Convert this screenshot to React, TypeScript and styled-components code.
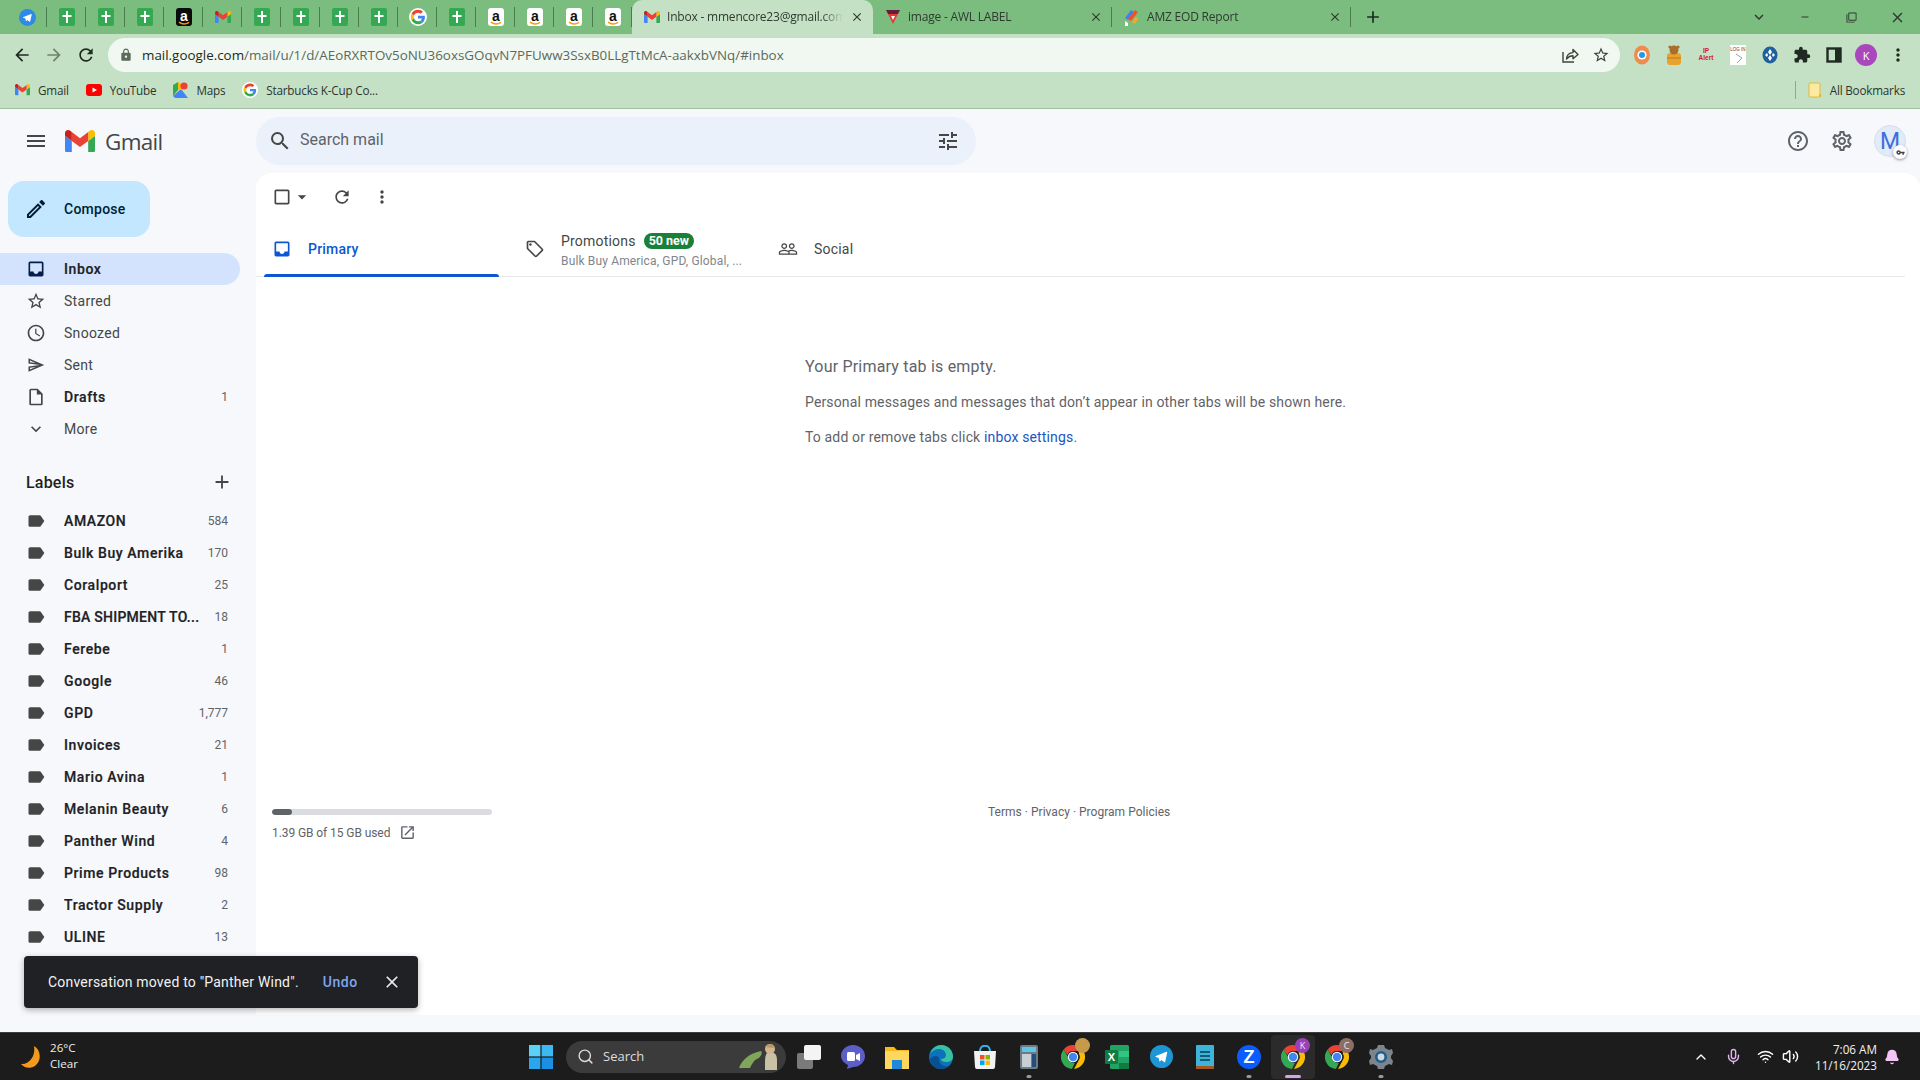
import React from 'react';
import styled, { createGlobalStyle } from 'styled-components';
import {
  MdAdd, MdArrowBack, MdArrowDropDown, MdArrowForward, MdCheckBoxOutlineBlank, MdClose, MdExpandMore, MdExtension,
  MdHelpOutline, MdInbox, MdLabel, MdLock, MdMenu, MdMoreVert, MdOpenInNew, MdOutlineEdit, MdOutlineInsertDriveFile,
  MdOutlineLocalOffer, MdOutlineSettings, MdPeopleOutline, MdRefresh, MdSearch, MdStarBorder, MdTune,
  MdAccessTime, MdOutlineSend, MdRemove, MdFilterNone, MdKeyboardArrowDown, MdVpnKey,
} from 'react-icons/md';
import { Bell, ChevronUp, Mic, Search, Volume2, Wifi } from 'lucide-react';

const GlobalStyle = createGlobalStyle`
  html, body { margin: 0; padding: 0; height: 1080px; overflow: hidden; background: #F6F8FC; }
  * { box-sizing: border-box; }
  body { font-family: Roboto, "Open Sans", Arial, sans-serif; }
`;

const Page = styled.div`
  width: 1920px;
  height: 1080px;
  display: flex;
  flex-direction: column;
  overflow: hidden;
  position: relative;
`;

/* browser chrome */
const TabStrip = styled.div`
  height: 34px;
  background: #7ABD7E;
  display: flex;
  align-items: stretch;
  padding-left: 8px;
  font-family: "Open Sans", sans-serif;
  font-size: 12px;
  color: #2f3a30;
  flex: none;
`;

const PinnedTab = styled.div`
  width: 39px;
  display: flex;
  align-items: center;
  justify-content: center;
  position: relative;
  &:not(:last-child)::after {
    content: '';
    position: absolute;
    right: 0;
    top: 7px;
    height: 20px;
    width: 1px;
    background: #4a7d4e;
  }
`;

const PageTab = styled.div<{ $active?: boolean }>`
  width: ${p => (p.$active ? '241px' : '239px')};
  background: ${p => (p.$active ? '#C5E1C5' : 'transparent')};
  border-radius: ${p => (p.$active ? '10px 10px 0 0' : '0')};
  display: flex;
  align-items: center;
  gap: 7px;
  padding: 0 9px 0 12px;
  position: relative;
  ${p => !p.$active && `
    &::after {
      content: '';
      position: absolute;
      right: 0;
      top: 7px;
      height: 20px;
      width: 1px;
      background: #4a7d4e;
    }
  `}
`;

const TabTitle = styled.span`
  flex: 1;
  min-width: 0;
  white-space: nowrap;
  overflow: hidden;
  letter-spacing: -0.2px;
  position: relative;
  top: -1px;
  mask-image: linear-gradient(to right, #000 88%, transparent 100%);
`;

const NewTab = styled.div`
  width: 44px;
  display: flex;
  align-items: center;
  justify-content: center;
  color: #1c2a1d;
`;

const WindowControls = styled.div`
  margin-left: auto;
  display: flex;
  align-items: center;
  color: #2f3a30;
`;

const WindowButton = styled.div`
  width: 46px;
  height: 34px;
  display: flex;
  align-items: center;
  justify-content: center;
`;

const Toolbar = styled.div`
  height: 42px;
  background: #C5E1C5;
  display: flex;
  align-items: center;
  padding: 0 6px 0 6px;
  flex: none;
`;

const NavButton = styled.div<{ $dim?: boolean }>`
  width: 32px;
  height: 32px;
  display: flex;
  align-items: center;
  justify-content: center;
  color: ${p => (p.$dim ? '#6f8370' : '#1f2a20')};
`;

const Omnibox = styled.div`
  width: 1512px;
  height: 34px;
  margin-left: 6px;
  background: #F1F8F1;
  border-radius: 17px;
  display: flex;
  align-items: center;
  padding: 0 4px 0 11px;
  font-family: "Open Sans", sans-serif;
  font-size: 13.4px;
  color: #5a6a5c;
`;

const UrlHost = styled.span`
  color: #1f2a20;
`;

const UrlText = styled.span`
  margin-left: 9px;
  white-space: nowrap;
  flex: 1;
`;

const OmniIcon = styled.div`
  width: 31px;
  display: flex;
  justify-content: center;
  color: #3a453b;
`;

const ExtRow = styled.div`
  display: flex;
  align-items: center;
  margin-left: 6px;
`;

const ExtSlot = styled.div`
  width: 32px;
  display: flex;
  justify-content: center;
  align-items: center;
  color: #1f2a20;
`;

const ProfileBadge = styled.div<{ $size: number; $bg: string }>`
  width: ${p => p.$size}px;
  height: ${p => p.$size}px;
  border-radius: 50%;
  background: ${p => p.$bg};
  color: #fff;
  display: flex;
  align-items: center;
  justify-content: center;
  font-size: ${p => Math.round(p.$size * 0.52)}px;
  font-family: "Open Sans", sans-serif;
`;

const BookmarkBar = styled.div`
  height: 33px;
  background: #C5E1C5;
  border-bottom: 1px solid #a4bea5;
  display: flex;
  align-items: center;
  padding: 0 15px 4px 15px;
  font-family: "Open Sans", sans-serif;
  font-size: 11.7px;
  color: #2c352d;
  letter-spacing: -0.2px;
  flex: none;
`;

const Bookmark = styled.div`
  display: flex;
  align-items: center;
  gap: 8px;
  margin-right: 17px;
  white-space: nowrap;
`;

const AllBookmarks = styled.div`
  margin-left: auto;
  display: flex;
  align-items: center;
  gap: 8px;
  height: 18px;
  padding-left: 12px;
  border-left: 1px solid #8fa890;
`;

/* gmail */
const Shell = styled.div`
  flex: 1;
  min-height: 0;
  background: #F6F8FC;
  display: flex;
  flex-direction: column;
`;

const Header = styled.div`
  height: 64px;
  display: flex;
  align-items: center;
  flex: none;
`;

const Brand = styled.div`
  width: 256px;
  display: flex;
  align-items: center;
  padding-left: 24px;
  color: #444746;
`;

const MenuGap = styled.span`
  width: 17px;
`;

const BrandName = styled.span`
  font-size: 22.5px;
  margin-left: 10px;
  color: #444746;
  font-family: "Open Sans", Roboto, sans-serif;
  letter-spacing: -0.7px;
`;

const SearchBar = styled.div`
  width: 720px;
  height: 48px;
  background: #EAF1FB;
  border-radius: 24px;
  display: flex;
  align-items: center;
  padding: 0 16px 0 12px;
  color: #444746;
`;

const SearchText = styled.span`
  flex: 1;
  margin-left: 8px;
  font-size: 16px;
  color: #5f6368;
  position: relative;
  top: -2px;
`;

const HeaderActions = styled.div`
  margin-left: auto;
  display: flex;
  align-items: center;
  gap: 20px;
  padding-right: 14px;
  color: #5f6368;
`;

const Avatar = styled.div`
  width: 32px;
  height: 32px;
  border-radius: 50%;
  background: #E3EAF8;
  border: 1px solid #d5deef;
  color: #3b6fe0;
  font-size: 23px;
  display: flex;
  align-items: center;
  justify-content: center;
  position: relative;
`;

const KeyBadge = styled.div`
  position: absolute;
  right: -2px;
  bottom: -3px;
  width: 14px;
  height: 14px;
  border-radius: 50%;
  background: #fff;
  box-shadow: 0 1px 3px rgba(0,0,0,.4);
  color: #444;
  display: flex;
  align-items: center;
  justify-content: center;
`;

const Body = styled.div`
  flex: 1;
  min-height: 0;
  display: flex;
  padding-bottom: 17px;
`;

const Sidebar = styled.aside`
  width: 256px;
  flex: none;
  overflow: hidden;
`;

const Compose = styled.div`
  width: 142px;
  height: 56px;
  margin: 8px 0 0 8px;
  border-radius: 16px;
  background: #C2E7FF;
  color: #001D35;
  display: flex;
  align-items: center;
  padding-left: 16px;
  gap: 16px;
  font-size: 14px;
  font-weight: 500;
  letter-spacing: .25px;
`;

const NavList = styled.div<{ $top: number }>`
  margin-top: ${p => p.$top}px;
`;

const Row = styled.div<{ $active?: boolean; $bold?: boolean }>`
  width: 240px;
  height: 32px;
  display: flex;
  align-items: center;
  padding: 0 12px 0 26px;
  border-radius: 0 16px 16px 0;
  background: ${p => (p.$active ? '#D3E3FD' : 'transparent')};
  color: ${p => (p.$active || p.$bold ? '#202124' : '#444746')};
  font-size: 14px;
  font-weight: ${p => (p.$active || p.$bold ? 500 : 400)};
  -webkit-text-stroke: ${p => (p.$active || p.$bold ? '0.2px' : '0')};
  letter-spacing: ${p => (p.$active || p.$bold ? '.6px' : '.3px')};
`;

const RowIcon = styled.div<{ $color?: string }>`
  width: 20px;
  display: flex;
  justify-content: center;
  margin-right: 18px;
  color: ${p => p.$color || '#444746'};
`;

const RowName = styled.span<{ $tight?: boolean }>`
  flex: 1;
  white-space: nowrap;
  overflow: hidden;
  letter-spacing: ${p => (p.$tight ? '.25px' : 'inherit')};
`;

const RowCount = styled.span`
  font-size: 12px;
  font-weight: 400;
  color: #5f6368;
  letter-spacing: 0;
  margin-left: 8px;
  -webkit-text-stroke: 0;
`;

const LabelsHead = styled.div`
  width: 240px;
  height: 32px;
  margin-top: 21px;
  display: flex;
  align-items: center;
  justify-content: space-between;
  padding: 0 7px 0 26px;
  font-size: 16px;
  font-weight: 500;
  color: #1f1f1f;
  letter-spacing: .2px;
`;

const MainCard = styled.main`
  flex: 1;
  background: #fff;
  border-radius: 16px 16px 0 0;
  display: flex;
  flex-direction: column;
`;

const ListTools = styled.div`
  height: 48px;
  display: flex;
  align-items: center;
  padding-left: 16px;
  color: #444746;
  flex: none;
`;

const ToolSlot = styled.div<{ $w: number; $left?: number }>`
  width: ${p => p.$w}px;
  margin-left: ${p => p.$left || 0}px;
  display: flex;
  align-items: center;
  justify-content: center;
`;

const CategoryTabs = styled.div`
  height: 56px;
  margin-right: 15px;
  padding-left: 8px;
  border-bottom: 1px solid #E7E8EA;
  display: flex;
  flex: none;
`;

const CategoryTab = styled.div<{ $active?: boolean; $w: number; $pad: number }>`
  width: ${p => p.$w}px;
  padding-left: ${p => p.$pad}px;
  display: flex;
  align-items: center;
  gap: 16px;
  font-size: 14px;
  letter-spacing: .2px;
  font-weight: ${p => (p.$active ? 500 : 400)};
  color: ${p => (p.$active ? '#0B57D0' : '#444746')};
  position: relative;
  ${p => p.$active && `
    &::after {
      content: '';
      position: absolute;
      left: 0;
      right: 0;
      bottom: -1px;
      height: 3px;
      background: #0B57D0;
      border-radius: 3px 3px 0 0;
    }
  `}
`;

const TabStack = styled.div`
  display: flex;
  flex-direction: column;
  gap: 5px;
  padding-top: 4px;
`;

const TabHeadline = styled.div`
  display: flex;
  align-items: center;
  gap: 8px;
`;

const NewPill = styled.span`
  background: #188038;
  color: #fff;
  font-size: 12.5px;
  font-weight: 700;
  line-height: 16px;
  padding: 0 5px;
  border-radius: 8px;
  letter-spacing: 0;
`;

const TabSnippet = styled.div`
  font-size: 12px;
  color: #80868b;
  letter-spacing: .15px;
  white-space: nowrap;
`;

const EmptyState = styled.div`
  padding: 79px 0 0 549px;
  color: #5f6368;
  font-size: 14px;
  line-height: 20px;
  letter-spacing: .15px;
  flex: none;
`;

const EmptyTitle = styled.div`
  font-size: 16px;
  line-height: 22px;
  margin-bottom: 14px;
  letter-spacing: .2px;
`;

const EmptyLine = styled.div`
  margin-bottom: 15px;
`;

const InboxLink = styled.span`
  color: #1a56c4;
`;

const Footer = styled.div`
  margin-top: 347px;
  padding-left: 16px;
  display: flex;
  gap: 496px;
  font-size: 12px;
  color: #5f6368;
`;

const Storage = styled.div`
  width: 220px;
`;

const StorageTrack = styled.div`
  height: 6px;
  border-radius: 3px;
  background: #DADCE0;
  overflow: hidden;
  margin-bottom: 9px;
`;

const StorageFill = styled.div`
  height: 100%;
  background: #5f6368;
  border-radius: 3px;
`;

const StorageText = styled.div`
  display: flex;
  align-items: center;
  gap: 9px;
  letter-spacing: -.08px;
`;

const Terms = styled.div`
  line-height: 12px;
  margin-top: -3px;
  letter-spacing: .02px;
`;

const Snackbar = styled.div`
  position: absolute;
  left: 24px;
  top: 956px;
  width: 394px;
  height: 52px;
  background: #202124;
  border-radius: 4px;
  box-shadow: 0 2px 6px rgba(0,0,0,.3);
  color: #f1f3f4;
  display: flex;
  align-items: center;
  padding: 0 16px 0 24px;
  font-size: 14px;
  letter-spacing: .2px;
`;

const Undo = styled.span`
  color: #7FA6EE;
  font-weight: 500;
  margin-left: 24px;
  flex: 1;
  letter-spacing: .5px;
`;

/* windows taskbar */
const Taskbar = styled.div`
  height: 48px;
  background: #1C1C1C;
  border-top: 1px solid #3c3c3c;
  display: flex;
  align-items: center;
  color: #fff;
  font-family: "Open Sans", sans-serif;
  flex: none;
`;

const Weather = styled.div`
  width: 529px;
  padding-left: 20px;
  display: flex;
  align-items: center;
  gap: 8px;
  font-size: 11.6px;
  line-height: 16px;
  color: #eee;
`;

const WeatherText = styled.div`
  margin-top: -2px;
`;

const TaskSearch = styled.div`
  width: 220px;
  height: 32px;
  margin-left: 13px;
  border-radius: 16px;
  background: #3B3B3B;
  display: flex;
  align-items: center;
  padding: 0 5px 1px 11px;
  gap: 9px;
  font-size: 13px;
  color: #ddd;
`;

const TaskSearchLabel = styled.span`
  flex: 1;
`;

const TaskApps = styled.div`
  display: flex;
  margin-left: 1px;
`;

const AppSlot = styled.div<{ $active?: boolean }>`
  width: 44px;
  height: 44px;
  display: flex;
  align-items: center;
  justify-content: center;
  position: relative;
  border-radius: 4px;
  background: ${p => (p.$active ? '#2b2b2b' : 'transparent')};
`;

const RunDot = styled.span<{ $active?: boolean }>`
  position: absolute;
  bottom: 1px;
  left: 50%;
  transform: translateX(-50%);
  width: ${p => (p.$active ? '16px' : '5px')};
  height: 3px;
  border-radius: 2px;
  background: ${p => (p.$active ? '#D9A3E6' : '#9a9a9a')};
`;

const AppBadge = styled.span<{ $bg: string }>`
  position: absolute;
  right: 5px;
  top: 3px;
  width: 15px;
  height: 15px;
  border-radius: 50%;
  background: ${p => p.$bg};
  color: #f4e6f7;
  font-size: 9px;
  line-height: 15px;
  display: flex;
  align-items: center;
  justify-content: center;
`;

const Tray = styled.div`
  margin-left: auto;
  display: flex;
  align-items: center;
  padding-right: 20px;
  color: #fff;
`;

const TraySlot = styled.div<{ $w: number }>`
  width: ${p => p.$w}px;
  display: flex;
  justify-content: center;
`;

const Clock = styled.div`
  width: 75px;
  text-align: right;
  font-size: 11.7px;
  line-height: 16px;
  margin: 0 7px 0 3px;
  color: #f2f2f2;
`;

/* drawn icons */
const GmailM = ({ size = 16 }: { size?: number }) => (
  <svg width={size} height={size * 0.75} viewBox="52 42 88 66">
    <path fill="#4285f4" d="M58 108h14V74L52 59v43c0 3.32 2.69 6 6 6" />
    <path fill="#34a853" d="M120 108h14c3.32 0 6-2.69 6-6V59l-20 15" />
    <path fill="#fbbc04" d="M120 48v26l20-15v-8c0-7.42-8.47-11.65-14.4-7.2" />
    <path fill="#ea4335" d="M72 74V48l24 18 24-18v26L96 92" />
    <path fill="#c5221f" d="M52 51v8l20 15V48l-5.6-4.2c-5.94-4.45-14.4-.22-14.4 7.2" />
  </svg>
);

const GoogleG = ({ size = 16, plate = false }: { size?: number; plate?: boolean }) => (
  <svg width={size} height={size} viewBox="-6 -6 60 60">
    {plate && <circle cx="24" cy="24" r="30" fill="#fff" />}
    <path fill="#EA4335" d="M24 9.5c3.54 0 6.71 1.22 9.21 3.6l6.85-6.85C35.9 2.38 30.47 0 24 0 14.62 0 6.51 5.38 2.56 13.22l7.98 6.19C12.43 13.72 17.74 9.5 24 9.5z" />
    <path fill="#4285F4" d="M46.98 24.55c0-1.57-.15-3.09-.38-4.55H24v9.02h12.94c-.58 2.96-2.26 5.48-4.78 7.18l7.73 6c4.51-4.18 7.09-10.36 7.09-17.65z" />
    <path fill="#FBBC05" d="M10.53 28.59c-.48-1.45-.76-2.99-.76-4.59s.27-3.14.76-4.59l-7.98-6.19C.92 16.46 0 20.12 0 24c0 3.88.92 7.54 2.56 10.78l7.97-6.19z" />
    <path fill="#34A853" d="M24 48c6.48 0 11.93-2.13 16.03-5.81l-7.73-6c-2.15 1.45-4.92 2.3-8.3 2.3-6.26 0-11.57-4.22-13.47-9.91l-7.98 6.19C6.51 42.62 14.62 48 24 48z" />
  </svg>
);

const SheetFav = () => (
  <svg width="16" height="18" viewBox="0 0 16 18">
    <rect width="16" height="18" rx="2" fill="#34A853" />
    <path d="M7 3h2v4h3.5v2H9v6H7V9H3.5V7H7z" fill="#fff" />
  </svg>
);

const AmazonFav = ({ dark = false }: { dark?: boolean }) => (
  <svg width="16" height="18" viewBox="0 0 16 18">
    <rect width="16" height="18" rx="3" fill={dark ? '#0b0b0b' : '#fff'} />
    <text x="8" y="13" textAnchor="middle" fontSize="14" fontWeight="700" fontFamily="Liberation Sans" fill={dark ? '#fff' : '#111'}>a</text>
    <path d="M3 14.2c3 2.2 7 2.2 10 .2" stroke="#F90" strokeWidth="1.6" fill="none" />
  </svg>
);

const TelegramIcon = ({ size = 16, bg = '#2F89E8' }: { size?: number; bg?: string }) => (
  <svg width={size} height={size} viewBox="0 0 24 24">
    <circle cx="12" cy="12" r="12" fill={bg} />
    <path d="M5.5 11.8l11.6-4.7c.6-.2 1 .1.8.9l-2 9.4c-.1.6-.5.8-1 .5l-3-2.2-1.5 1.4c-.4.3-.6.2-.7-.3l-.6-3.3-3-1c-.7-.2-.7-.5.4-.7z" fill="#fff" />
  </svg>
);

const ChromeIcon = ({ size = 24 }: { size?: number }) => (
  <svg width={size} height={size} viewBox="0 0 24 24">
    <path d="M12 0a12 12 0 0 1 10.4 6H12a6 6 0 0 0-5.6 3.9L2.7 4.4A12 12 0 0 1 12 0z" fill="#EA4335" />
    <path d="M22.4 6A12 12 0 0 1 13 24l4.6-8.6A6 6 0 0 0 18 9l-.3-3z" fill="#FBBC04" />
    <path d="M2.7 4.4l4.6 8.2A6 6 0 0 0 13.8 18L11 24A12 12 0 0 1 2.7 4.4z" fill="#34A853" />
    <circle cx="12" cy="12" r="5.2" fill="#fff" />
    <circle cx="12" cy="12" r="4.2" fill="#4285F4" />
  </svg>
);

const YouTubeFav = () => (
  <svg width="16" height="16" viewBox="0 0 16 16">
    <rect y="2" width="16" height="12" rx="3" fill="#F00" />
    <path d="M6.5 5.5v5L11 8z" fill="#fff" />
  </svg>
);

const MapsFav = () => (
  <svg width="15" height="16" viewBox="0 0 15 16">
    <path d="M0 3l5-3v8L0 14z" fill="#34A853" />
    <path d="M0 14l8-7 7 9H2z" fill="#4285F4" />
    <path d="M5 0l5 3v5L5 8z" fill="#FBBC04" />
    <circle cx="11" cy="4" r="3.6" fill="#EA4335" />
  </svg>
);

const AwlFav = () => (
  <svg width="16" height="16" viewBox="0 0 16 16">
    <path d="M1 1h14l-2 4H3z" fill="#6a1b3a" />
    <path d="M3 5h10l-5 10z" fill="#E53935" />
    <path d="M6 7h4l-2 4z" fill="#fff" />
  </svg>
);

const ReportFav = () => (
  <svg width="16" height="18" viewBox="0 0 16 18">
    <path d="M7 2l3 2-6 8-3-2z" fill="#3B82F6" />
    <path d="M11 2l3 2-7 9-3-2z" fill="#F4511E" />
    <path d="M12 9l2 2-3 5-3-2z" fill="#F9A825" />
    <path d="M1 13l3 2v3H1z" fill="#fff" />
  </svg>
);

const FolderSmall = () => (
  <svg width="14" height="16" viewBox="0 0 14 16">
    <rect x="1" y="1" width="11" height="14" rx="1" fill="#FDE9A0" stroke="#E2B93B" />
    <rect x="11" y="12" width="2" height="3" fill="#E2B93B" />
  </svg>
);

const ShareIcon = () => (
  <svg width="20" height="20" viewBox="0 0 20 20" fill="none" stroke="#3a453b" strokeWidth="1.4">
    <path d="M3 7v10h11" />
    <path d="M6.5 14c.3-4 3-6.2 6.5-6.4V4.5l5 5-5 4.3v-3c-2.6 0-4.6 1-6.5 3.2z" strokeLinejoin="round" />
  </svg>
);

const Ext = ({ kind }: { kind: string }) => {
  if (kind === 'orange') {
    return (
      <svg width="16" height="20" viewBox="0 0 16 20">
        <ellipse cx="8" cy="10" rx="8" ry="9.5" fill="#F08B4E" />
        <circle cx="8" cy="10" r="4.6" fill="#fff" />
        <circle cx="8" cy="10" r="3" fill="#1E9BE8" />
      </svg>
    );
  }
  if (kind === 'bear') {
    return (
      <svg width="18" height="20" viewBox="0 0 18 20">
        <rect x="2" y="8" width="14" height="12" rx="3" fill="#E8A32E" />
        <path d="M2 13h14" stroke="#B87A16" strokeWidth="1" />
        <circle cx="9" cy="5" r="4.5" fill="#A86E2A" />
        <circle cx="5" cy="2" r="1.6" fill="#A86E2A" />
        <circle cx="13" cy="2" r="1.6" fill="#A86E2A" />
      </svg>
    );
  }
  if (kind === 'ip') {
    return (
      <svg width="18" height="18" viewBox="0 0 18 18">
        <text x="9" y="7" textAnchor="middle" fontSize="6.5" fontWeight="700" fill="#D32020" fontFamily="Liberation Sans">IP</text>
        <text x="9" y="14" textAnchor="middle" fontSize="6.5" fontWeight="700" fill="#D32020" fontFamily="Liberation Sans">Alert</text>
      </svg>
    );
  }
  if (kind === 'login') {
    return (
      <svg width="16" height="20" viewBox="0 0 16 20">
        <rect width="16" height="20" fill="#fff" />
        <text x="8" y="6" textAnchor="middle" fontSize="4.5" fill="#7a1f1f" fontFamily="Liberation Sans">LOG IN</text>
        <path d="M6 9l6 4-5 5" stroke="#888" strokeWidth=".8" fill="none" />
      </svg>
    );
  }
  return (
    <svg width="16" height="18" viewBox="0 0 16 18">
      <ellipse cx="8" cy="9" rx="7.5" ry="8.5" fill="#1F5F9E" />
      <path d="M8 3l2 3-2 3-2-3zM8 9l2 3-2 3-2-3zM3 9l2-2 1 2-1 2zM13 9l-2-2-1 2 1 2z" fill="#fff" />
    </svg>
  );
};

const SidePanelIcon = () => (
  <svg width="16" height="16" viewBox="0 0 16 16">
    <rect x="1.5" y="1.5" width="13" height="13" fill="none" stroke="#1f2a20" strokeWidth="2.4" />
    <rect x="9" y="2" width="5" height="12" fill="#1f2a20" />
  </svg>
);

const StartIcon = () => (
  <svg width="24" height="24" viewBox="0 0 24 24">
    <rect width="11.4" height="11.4" fill="#5CD1F7" />
    <rect x="12.6" width="11.4" height="11.4" fill="#3DB8F2" />
    <rect y="12.6" width="11.4" height="11.4" fill="#2AA6EE" />
    <rect x="12.6" y="12.6" width="11.4" height="11.4" fill="#1A8FE3" />
  </svg>
);

const MoonIcon = () => (
  <svg width="22" height="24" viewBox="0 0 22 24">
    <path d="M14 1c7 4 8 15 1 20-5 3-11 2-14-2 8 1 15-8 13-18z" fill="#F39A1E" />
  </svg>
);

const Iguana = () => (
  <svg width="44" height="28" viewBox="0 0 44 28">
    <path d="M2 26c3-8 9-14 22-17 2 2 0 6-4 8-3 1-5 5-7 9z" fill="#7FA65A" />
    <path d="M28 20c0-6 1-10 5-10s7 2 7 8v10H28z" fill="#C9C2A4" />
    <circle cx="33" cy="7" r="5" fill="#D6B690" />
    <path d="M28 5c2-4 9-4 10 1z" fill="#B79A5E" />
  </svg>
);

const TaskAppIcon = ({ kind }: { kind: string }) => {
  switch (kind) {
    case 'view':
      return (
        <svg width="24" height="24" viewBox="0 0 24 24">
          <rect y="8" width="16" height="16" rx="2" fill="#7a7a7a" />
          <rect x="7" width="17" height="15" rx="2" fill="#f4f4f4" />
        </svg>
      );
    case 'meet':
      return (
        <svg width="24" height="24" viewBox="0 0 24 24">
          <path d="M12 0c7 0 12 5 12 11s-5 11-12 11l-6 2 1-4C3 18 0 15 0 11 0 5 5 0 12 0z" fill="#5B5FC7" />
          <rect x="6" y="7" width="8" height="9" rx="1.5" fill="#fff" />
          <path d="M15 10l4-2v8l-4-2z" fill="#fff" />
        </svg>
      );
    case 'files':
      return (
        <svg width="24" height="24" viewBox="0 0 24 24">
          <path d="M0 2h9l3 3h12v19H0z" fill="#F9B81C" />
          <rect y="6" width="24" height="18" fill="#FFD75E" />
          <rect x="7" y="15" width="10" height="9" fill="#1E88D9" />
        </svg>
      );
    case 'edge':
      return (
        <svg width="24" height="24" viewBox="0 0 24 24">
          <circle cx="12" cy="12" r="12" fill="#0C72BA" />
          <path d="M1 9C3 3 8 0 12 0c7 0 12 5 12 12 0 3-3 5-7 5-3 0-5-1-5-3 2 0 5-1 5-4 0-4-4-6-7-6-4 0-7 2-9 5z" fill="#35C1A3" />
          <path d="M10 14c0 5 4 8 9 7-2 2-4 3-7 3C6 24 2 20 1 14c1-2 4-3 6-3 2 0 3 1 3 3z" fill="#0A4F92" />
        </svg>
      );
    case 'store':
      return (
        <svg width="24" height="24" viewBox="0 0 24 24">
          <path d="M7 6c0-7 10-7 10 0" stroke="#36B5F0" strokeWidth="2" fill="none" />
          <path d="M1 6h22l-1 16a2 2 0 0 1-2 2H4a2 2 0 0 1-2-2z" fill="#F2F2F2" />
          <rect x="7" y="10" width="4.5" height="4.5" fill="#F25022" />
          <rect x="12.5" y="10" width="4.5" height="4.5" fill="#7FBA00" />
          <rect x="7" y="15.5" width="4.5" height="4.5" fill="#00A4EF" />
          <rect x="12.5" y="15.5" width="4.5" height="4.5" fill="#FFB900" />
        </svg>
      );
    case 'calc':
      return (
        <svg width="18" height="24" viewBox="0 0 18 24">
          <rect width="18" height="24" rx="2" fill="#6e7a85" />
          <rect x="2" y="2" width="14" height="5" fill="#5CC6E8" />
          <rect x="2" y="9" width="9" height="13" fill="#c7ced4" />
          <rect x="12" y="9" width="4" height="13" fill="#234e7a" />
        </svg>
      );
    case 'excel':
      return (
        <svg width="24" height="24" viewBox="0 0 24 24">
          <rect x="5" width="19" height="24" rx="1.5" fill="#21A366" />
          <rect x="14" y="6" width="10" height="6" fill="#33C481" />
          <rect x="14" y="18" width="10" height="6" fill="#107C41" />
          <rect y="5" width="13" height="14" rx="1" fill="#107C41" />
          <text x="6.5" y="16" textAnchor="middle" fontSize="11" fontWeight="700" fill="#fff" fontFamily="Liberation Sans">X</text>
        </svg>
      );
    case 'note':
      return (
        <svg width="18" height="24" viewBox="0 0 18 24">
          <rect width="18" height="24" rx="1" fill="#3FB4D9" />
          <rect y="21" width="18" height="3" fill="#A5581F" />
          <path d="M4 7h10M4 11h10M4 15h10" stroke="#0E5C7A" strokeWidth="2" />
        </svg>
      );
    case 'zoom':
      return (
        <svg width="24" height="24" viewBox="0 0 24 24">
          <circle cx="12" cy="12" r="12" fill="#0B5CFF" />
          <text x="12" y="18" textAnchor="middle" fontSize="18" fontWeight="700" fill="#fff" fontFamily="Liberation Sans">Z</text>
        </svg>
      );
    case 'gear':
      return (
        <svg width="24" height="24" viewBox="0 0 24 24">
          <path d="M9 0h6l1 3 4 2 3-1 1 4-2 3v2l2 3-1 4-3-1-4 2-1 3H9l-1-3-4-2-3 1-1-4 2-3v-2L0 8l1-4 3 1 4-2z" fill="#7c858d" />
          <circle cx="12" cy="12" r="6" fill="#1E5E8F" />
          <circle cx="12" cy="12" r="3.4" fill="#cfd8dc" />
        </svg>
      );
    default:
      return null;
  }
};

const pinned = ['tg', 's', 's', 's', 'ad', 'm', 's', 's', 's', 's', 'g', 's', 'a', 'a', 'a', 'a'];

const labels: [string, string][] = [
  ['AMAZON', '584'], ['Bulk Buy Amerika', '170'], ['Coralport', '25'], ['FBA SHIPMENT TO...', '18'],
  ['Ferebe', '1'], ['Google', '46'], ['GPD', '1,777'], ['Invoices', '21'], ['Mario Avina', '1'],
  ['Melanin Beauty', '6'], ['Panther Wind', '4'], ['Prime Products', '98'], ['Tractor Supply', '2'], ['ULINE', '13'],
];

const taskApps = ['view', 'meet', 'files', 'edge', 'store', 'calc', 'chrome', 'excel', 'tg', 'note', 'zoom', 'chromeK', 'chromeC', 'gear'];
const running = ['calc', 'zoom', 'gear'];

function pinnedIcon(kind: string) {
  if (kind === 'tg') return <TelegramIcon size={17} />;
  if (kind === 's') return <SheetFav />;
  if (kind === 'ad') return <AmazonFav dark />;
  if (kind === 'a') return <AmazonFav />;
  if (kind === 'm') return <GmailM size={16} />;
  return <GoogleG size={18} plate />;
}

function App() {
  return (
    <Page>
      <GlobalStyle />
      <TabStrip>
        {pinned.map((k, i) => (
          <PinnedTab key={i}>{pinnedIcon(k)}</PinnedTab>
        ))}
        <PageTab $active>
          <GmailM size={16} />
          <TabTitle>Inbox - mmencore23@gmail.com</TabTitle>
          <MdClose size={14} />
        </PageTab>
        <PageTab>
          <AwlFav />
          <TabTitle>image - AWL LABEL</TabTitle>
          <MdClose size={14} />
        </PageTab>
        <PageTab>
          <ReportFav />
          <TabTitle>AMZ EOD Report</TabTitle>
          <MdClose size={14} />
        </PageTab>
        <NewTab><MdAdd size={20} /></NewTab>
        <WindowControls>
          <WindowButton><MdKeyboardArrowDown size={18} /></WindowButton>
          <WindowButton><MdRemove size={12} /></WindowButton>
          <WindowButton><MdFilterNone size={11} /></WindowButton>
          <WindowButton><MdClose size={17} /></WindowButton>
        </WindowControls>
      </TabStrip>

      <Toolbar>
        <NavButton><MdArrowBack size={20} /></NavButton>
        <NavButton $dim><MdArrowForward size={20} /></NavButton>
        <NavButton><MdRefresh size={20} /></NavButton>
        <Omnibox>
          <MdLock size={14} />
          <UrlText><UrlHost>mail.google.com</UrlHost>/mail/u/1/d/AEoRXRTOv5oNU36oxsGOqvN7PFUww3SsxB0LLgTtMcA-aakxbVNq/#inbox</UrlText>
          <OmniIcon><ShareIcon /></OmniIcon>
          <OmniIcon><MdStarBorder size={18} /></OmniIcon>
        </Omnibox>
        <ExtRow>
          <ExtSlot><Ext kind="orange" /></ExtSlot>
          <ExtSlot><Ext kind="bear" /></ExtSlot>
          <ExtSlot><Ext kind="ip" /></ExtSlot>
          <ExtSlot><Ext kind="login" /></ExtSlot>
          <ExtSlot><Ext kind="blue" /></ExtSlot>
          <ExtSlot><MdExtension size={18} /></ExtSlot>
          <ExtSlot><SidePanelIcon /></ExtSlot>
          <ExtSlot><ProfileBadge $size={22} $bg="#AB47BC">K</ProfileBadge></ExtSlot>
          <ExtSlot><MdMoreVert size={20} /></ExtSlot>
        </ExtRow>
      </Toolbar>

      <BookmarkBar>
        <Bookmark><GmailM size={15} />Gmail</Bookmark>
        <Bookmark><YouTubeFav />YouTube</Bookmark>
        <Bookmark><MapsFav />Maps</Bookmark>
        <Bookmark><GoogleG size={16} plate />Starbucks K-Cup Co...</Bookmark>
        <AllBookmarks><FolderSmall />All Bookmarks</AllBookmarks>
      </BookmarkBar>

      <Shell>
        <Header>
          <Brand>
            <MdMenu size={24} />
            <MenuGap />
            <GmailM size={30} />
            <BrandName>Gmail</BrandName>
          </Brand>
          <SearchBar>
            <MdSearch size={24} />
            <SearchText>Search mail</SearchText>
            <MdTune size={24} />
          </SearchBar>
          <HeaderActions>
            <MdHelpOutline size={24} />
            <MdOutlineSettings size={24} />
            <Avatar>
              M
              <KeyBadge><MdVpnKey size={9} /></KeyBadge>
            </Avatar>
          </HeaderActions>
        </Header>

        <Body>
          <Sidebar>
            <Compose><MdOutlineEdit size={24} />Compose</Compose>
            <NavList $top={16}>
              <Row $active><RowIcon $color="#041E49"><MdInbox size={20} /></RowIcon><RowName>Inbox</RowName></Row>
              <Row><RowIcon><MdStarBorder size={20} /></RowIcon><RowName>Starred</RowName></Row>
              <Row><RowIcon><MdAccessTime size={20} /></RowIcon><RowName>Snoozed</RowName></Row>
              <Row><RowIcon><MdOutlineSend size={18} /></RowIcon><RowName>Sent</RowName></Row>
              <Row $bold><RowIcon><MdOutlineInsertDriveFile size={20} /></RowIcon><RowName>Drafts</RowName><RowCount>1</RowCount></Row>
              <Row><RowIcon><MdExpandMore size={20} /></RowIcon><RowName>More</RowName></Row>
            </NavList>
            <LabelsHead>Labels<MdAdd size={22} color="#444746" /></LabelsHead>
            <NavList $top={7}>
              {labels.map(([name, count]) => (
                <Row $bold key={name}>
                  <RowIcon><MdLabel size={20} /></RowIcon>
                  <RowName $tight={name.startsWith('FBA')}>{name}</RowName>
                  <RowCount>{count}</RowCount>
                </Row>
              ))}
            </NavList>
          </Sidebar>

          <MainCard>
            <ListTools>
              <ToolSlot $w={20}><MdCheckBoxOutlineBlank size={20} /></ToolSlot>
              <ToolSlot $w={20}><MdArrowDropDown size={20} /></ToolSlot>
              <ToolSlot $w={40} $left={10}><MdRefresh size={20} /></ToolSlot>
              <ToolSlot $w={40}><MdMoreVert size={20} /></ToolSlot>
            </ListTools>
            <CategoryTabs>
              <CategoryTab $active $w={235} $pad={8}>
                <MdInbox size={20} />
                Primary
              </CategoryTab>
              <CategoryTab $w={271} $pad={26}>
                <MdOutlineLocalOffer size={20} />
                <TabStack>
                  <TabHeadline>Promotions<NewPill>50 new</NewPill></TabHeadline>
                  <TabSnippet>Bulk Buy America, GPD, Global, ...</TabSnippet>
                </TabStack>
              </CategoryTab>
              <CategoryTab $w={200} $pad={8}>
                <MdPeopleOutline size={20} />
                Social
              </CategoryTab>
            </CategoryTabs>
            <EmptyState>
              <EmptyTitle>Your Primary tab is empty.</EmptyTitle>
              <EmptyLine>Personal messages and messages that don’t appear in other tabs will be shown here.</EmptyLine>
              <EmptyLine>To add or remove tabs click <InboxLink>inbox settings</InboxLink>.</EmptyLine>
            </EmptyState>
            <Footer>
              <Storage>
                <StorageTrack><StorageFill style={{ width: `${(1.39 / 15) * 100}%` }} /></StorageTrack>
                <StorageText>1.39 GB of 15 GB used <MdOpenInNew size={17} /></StorageText>
              </Storage>
              <Terms>Terms · Privacy · Program Policies</Terms>
            </Footer>
          </MainCard>
        </Body>
      </Shell>

      <Snackbar>
        Conversation moved to "Panther Wind".
        <Undo>Undo</Undo>
        <MdClose size={20} color="#e8eaed" />
      </Snackbar>

      <Taskbar>
        <Weather>
          <MoonIcon />
          <WeatherText>26°C<br />Clear</WeatherText>
        </Weather>
        <StartIcon />
        <TaskSearch>
          <Search size={17} />
          <TaskSearchLabel>Search</TaskSearchLabel>
          <Iguana />
        </TaskSearch>
        <TaskApps>
          {taskApps.map(app => (
            <AppSlot key={app} $active={app === 'chromeK'}>
              {app === 'tg' && <TelegramIcon size={23} bg="#1E96D6" />}
              {app.startsWith('chrome') && <ChromeIcon />}
              {app !== 'tg' && !app.startsWith('chrome') && <TaskAppIcon kind={app} />}
              {app === 'chromeK' && <AppBadge $bg="#9C3FB8">K</AppBadge>}
              {app === 'chromeC' && <AppBadge $bg="#8D6E63">C</AppBadge>}
              {app === 'chrome' && <AppBadge $bg="#C79A4B" />}
              {running.includes(app) && <RunDot />}
              {app === 'chromeK' && <RunDot $active />}
            </AppSlot>
          ))}
        </TaskApps>
        <Tray>
          <TraySlot $w={32}><ChevronUp size={16} /></TraySlot>
          <TraySlot $w={32}><Mic size={17} color="#E3B6EE" /></TraySlot>
          <TraySlot $w={32}><Wifi size={17} /></TraySlot>
          <TraySlot $w={18}><Volume2 size={17} /></TraySlot>
          <Clock>7:06 AM<br />11/16/2023</Clock>
          <Bell size={16} color="#F3C6F5" fill="#F3C6F5" />
        </Tray>
      </Taskbar>
    </Page>
  );
}

export default App;
